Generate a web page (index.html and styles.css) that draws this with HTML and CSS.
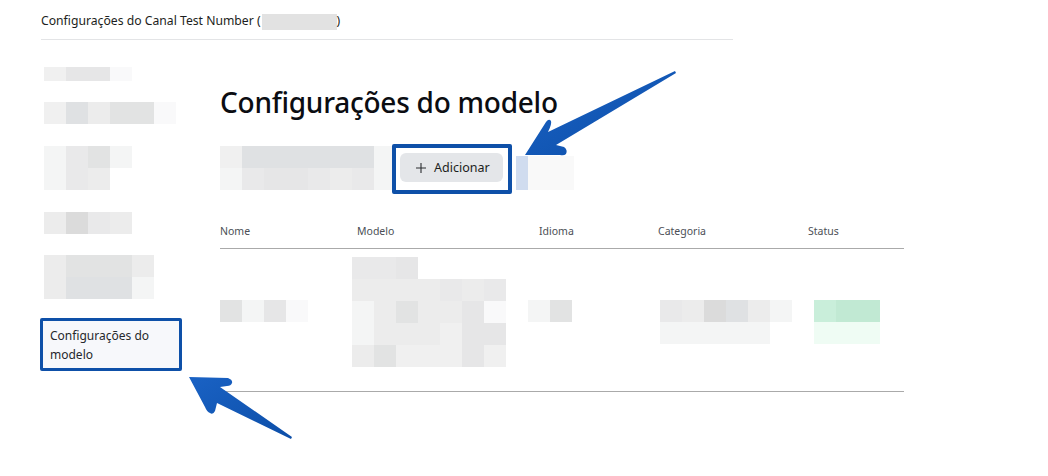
FILE: index.html
```html
<!DOCTYPE html>
<html lang="pt">
<head>
  <meta charset="UTF-8">
  <title>Configurações do modelo</title>
  <meta name="viewport" content="width=device-width, initial-scale=1.0">
  <link rel="stylesheet" href="styles.css">
</head>
<body>
  <header class="channel-header">
    <span>Configurações do Canal Test Number (</span><span class="phone-mask"></span><span>)</span>
  </header>

  <div class="layout">
    <aside class="sidebar">
      <div class="mosaic side-a">
        <div class="row short"><i class="g2"></i><i class="g5"></i><i class="g5"></i><i class="g0"></i></div>
      </div>
      <div class="mosaic side-b">
        <div class="row"><i class="g2"></i><i class="g7"></i><i class="g3"></i><i class="g6"></i><i class="g6"></i><i class="g0"></i></div>
      </div>
      <div class="mosaic side-c">
        <div class="row"><i class="g1"></i><i class="g4"></i><i class="g6"></i><i class="g1"></i></div>
        <div class="row"><i class="g1"></i><i class="g4"></i><i class="g3"></i></div>
      </div>
      <div class="mosaic side-d">
        <div class="row"><i class="g3"></i><i class="g8"></i><i class="g4"></i><i class="g3"></i></div>
      </div>
      <div class="mosaic side-e">
        <div class="row"><i class="g3"></i><i class="g6"></i><i class="g6"></i><i class="g6"></i><i class="g3"></i></div>
        <div class="row"><i class="g3"></i><i class="g7"></i><i class="g7"></i><i class="g7"></i><i class="g1"></i></div>
      </div>
      <a class="side-link" href="#">Configurações do modelo</a>
    </aside>

    <main class="content">
      <h1>Configurações do modelo</h1>

      <div class="toolbar">
        <div class="mosaic">
          <div class="row"><i class="g2"></i><i class="g7"></i><i class="g7"></i><i class="g7"></i><i class="g7"></i><i class="g7"></i><i class="g7"></i><i class="g1 narrow"></i></div>
          <div class="row"><i class="g1"></i><i class="g4"></i><i class="g5"></i><i class="g5"></i><i class="g4"></i><i class="g3"></i><i class="g4"></i><i class="g1 narrow"></i></div>
        </div>
        <div class="add-frame">
          <button class="add-btn" type="button">
            <svg width="12" height="12" viewBox="0 0 12 12"><path d="M6 1v10M1 6h10" stroke="#2a2c30" stroke-width="1.1" fill="none"/></svg>
            Adicionar
          </button>
        </div>
        <div class="toolbar-rest"></div>
      </div>

      <table class="templates">
        <thead>
          <tr>
            <th class="col-name">Nome</th>
            <th class="col-model">Modelo</th>
            <th class="col-lang">Idioma</th>
            <th class="col-cat">Categoria</th>
            <th>Status</th>
          </tr>
        </thead>
        <tbody>
          <tr>
            <td>
              <div class="mosaic cell-name">
                <div class="row"><i class="g6"></i><i class="g1"></i><i class="g5"></i><i class="g0"></i></div>
              </div>
            </td>
            <td>
              <div class="mosaic cell-model">
                <div class="row"><i class="g4"></i><i class="g4"></i><i class="g5"></i></div>
                <div class="row"><i class="g3"></i><i class="g3"></i><i class="g3"></i><i class="g3"></i><i class="g4"></i><i class="g3"></i><i class="g4"></i></div>
                <div class="row"><i class="g1"></i><i class="g3"></i><i class="g6"></i><i class="g3"></i><i class="g3"></i><i class="g5"></i><i class="g0"></i></div>
                <div class="row"><i class="g1"></i><i class="g3"></i><i class="g3"></i><i class="g3"></i><i class="g2"></i><i class="g5"></i><i class="g5"></i></div>
                <div class="row"><i class="g3"></i><i class="g6"></i><i class="g2"></i><i class="g2"></i><i class="g2"></i><i class="g5"></i><i class="g2"></i></div>
              </div>
            </td>
            <td>
              <div class="mosaic cell-lang">
                <div class="row"><i class="g1"></i><i class="g6"></i></div>
              </div>
            </td>
            <td>
              <div class="mosaic cell-cat">
                <div class="row"><i class="g4"></i><i class="g3"></i><i class="g8"></i><i class="g7"></i><i class="g3"></i><i class="g1"></i></div>
                <div class="row"><i class="g1"></i><i class="g1"></i><i class="g1"></i><i class="g1"></i><i class="g1"></i></div>
              </div>
            </td>
            <td>
              <div class="mosaic cell-status">
                <div class="row"><i class="green"></i><i class="green-dark"></i><i class="green-dark"></i></div>
                <div class="row"><i class="green-pale"></i><i class="green-pale"></i><i class="green-pale"></i></div>
              </div>
            </td>
          </tr>
        </tbody>
      </table>
    </main>
  </div>

  <svg class="arrows" width="1048" height="476" viewBox="0 0 1048 476">
    <defs>
      <linearGradient id="arrowFill" x1="0" y1="0" x2="1" y2="1">
        <stop offset="0" stop-color="#1a62c4"/>
        <stop offset="1" stop-color="#0c4ea8"/>
      </linearGradient>
    </defs>
    <path fill="url(#arrowFill)" d="M525 155 L546 122 Q549 118 551 121 Q552 124 548 132 L675 71 L676 73 L556 145 L564 147 Q568 150 566 154 Q564 156 560 155 Z"/>
    <path fill="url(#arrowFill)" d="M189 377 L228 378 Q233 380 232 383 Q231 386 227 386 L220 387 L292 437 L291 439 L217 403 L215 411 Q213 415 210 413 Q207 412 205 407 Z"/>
  </svg>
</body>
</html>
```

FILE: styles.css
```css
* {
  box-sizing: border-box;
}

body {
  font-family: "Noto Sans", "Open Sans", sans-serif;
  margin: 0;
  width: 1048px;
  height: 476px;
  overflow: hidden;
  background: #fff;
  color: #1c1e21;
  position: relative;
}

.channel-header {
  margin-left: 41px;
  width: 692px;
  height: 40px;
  padding-top: 12px;
  font-size: 12.2px;
  line-height: 18px;
  border-bottom: 1px solid #e3e4e6;
  display: flex;
}

.phone-mask {
  width: 75px;
  height: 16px;
  background: #e2e2e2;
  margin-left: 1px;
  margin-top: 2px;
}

.layout {
  display: flex;
}

.sidebar {
  width: 180px;
  margin-left: 40px;
}

.content {
  width: 684px;
}

/* blurred blocks */
.mosaic {
  filter: blur(0.5px);
}

.row {
  display: flex;
}

.row i {
  display: block;
  width: 22px;
  height: 22px;
}

.row.short i {
  height: 14px;
}

.row i.narrow {
  width: 18px;
}

.g0 { background: #f9f9fa; }
.g1 { background: #f4f5f5; }
.g2 { background: #f0f0f0; }
.g3 { background: #ececec; }
.g4 { background: #e9e9ea; }
.g5 { background: #e6e6e7; }
.g6 { background: #e2e3e3; }
.g7 { background: #dfe1e3; }
.g8 { background: #dbdbdb; }
.green { background: #c9eeda; }
.green-dark { background: #c1e9d3; }
.green-pale { background: #effcf4; }

.side-a { margin: 27px 0 0 4px; }
.side-b { margin: 21px 0 0 4px; }
.side-c { margin: 22px 0 0 4px; }
.side-d { margin: 22px 0 0 4px; }
.side-e { margin: 21px 0 0 4px; }

.side-link {
  display: block;
  width: 142px;
  height: 53px;
  margin-top: 19px;
  padding: 5px 0 0 7px;
  border: 3px solid #0e50a8;
  border-radius: 2px;
  background: #f7f8fb;
  color: #26282c;
  font-size: 12px;
  line-height: 19px;
  text-decoration: none;
}

h1 {
  margin: 42px 0 0;
  font-size: 28px;
  line-height: 40px;
  font-weight: 500;
  letter-spacing: -0.25px;
  color: #0b0d12;
}

.toolbar {
  display: flex;
  margin-top: 24px;
}

.add-frame {
  width: 120px;
  height: 50px;
  margin-top: -2px;
  padding: 5px 0 0 4px;
  border: 4px solid #0e50a8;
  border-radius: 2px;
  background: #fff;
}

.add-btn {
  display: flex;
  align-items: center;
  gap: 7px;
  width: 103px;
  height: 29px;
  padding: 0 0 0 15px;
  border: none;
  border-radius: 6px;
  background: #e4e6e9;
  color: #1c1e21;
  font-family: inherit;
  font-size: 12.5px;
  cursor: pointer;
}

.toolbar-rest {
  width: 58px;
  height: 34px;
  margin: 10px 0 0 4px;
  background: linear-gradient(90deg, #d0dcef 12px, #f9f9f9 12px);
}

.templates {
  width: 684px;
  margin-top: 21px;
  border-collapse: collapse;
  table-layout: fixed;
  border-bottom: 1px solid #aaa;
}

.templates th {
  height: 33px;
  padding: 0;
  text-align: left;
  font-size: 10.5px;
  font-weight: 400;
  color: #4b4f56;
  border-bottom: 1px solid #aaa;
}

.col-name { width: 137px; }
.col-model { width: 182px; }
.col-lang { width: 119px; }
.col-cat { width: 150px; }

.templates td {
  height: 143px;
  padding: 0;
  vertical-align: top;
}

.cell-name { margin-top: 51px; }
.cell-model { margin: 8px 0 0 -5px; }
.cell-lang { margin: 51px 0 0 -11px; }
.cell-cat { margin: 51px 0 0 2px; }
.cell-status { margin: 51px 0 0 6px; }

.arrows {
  position: absolute;
  top: 0;
  left: 0;
  pointer-events: none;
}
```
